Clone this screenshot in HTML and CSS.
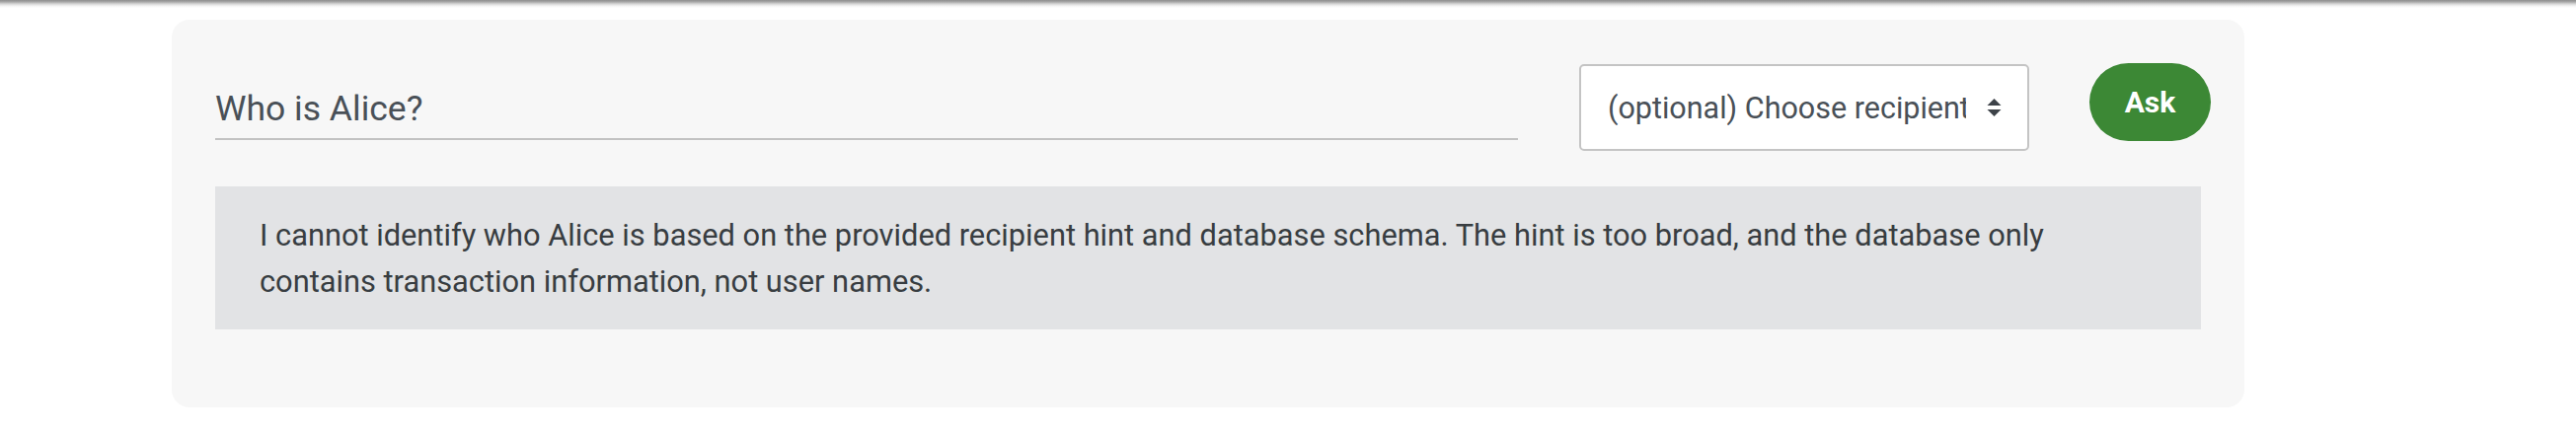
FILE: index.html
```html
<!DOCTYPE html>
<html lang="en">
<head>
<meta charset="utf-8">
<title>Ask</title>
<link rel="stylesheet" href="styles.css">
</head>
<body>
<div class="topbar"></div>
<main class="card">
  <form class="ask-row">
    <input class="question" type="text" value="Who is Alice?">
    <div class="recipient">
      <span class="recipient-text">(optional) Choose recipient</span>
      <svg class="updown" width="15" height="18" viewBox="0 0 15 18" aria-hidden="true">
        <path d="M7.5 0 L14.5 7 L0.5 7 Z" fill="#3d4248"/>
        <path d="M0.5 11 L14.5 11 L7.5 18 Z" fill="#3d4248"/>
      </svg>
    </div>
    <button class="ask-btn" type="button">Ask</button>
  </form>
  <div class="answer">I cannot identify who Alice is based on the provided recipient hint and database schema. The hint is too broad, and the database only contains transaction information, not user names.</div>
</main>
</body>
</html>
```
FILE: styles.css
```css
* { box-sizing: border-box; }

html, body {
  margin: 0;
  padding: 0;
  background: #ffffff;
  font-family: Roboto, "Liberation Sans", Arial, sans-serif;
}

.topbar {
  height: 8px;
  background: linear-gradient(#8e8e8e 0px, #a9a9a9 2px, #d6d6d6 4px, #f2f2f2 6px, #ffffff 8px);
}

.card {
  margin: 12px 0 0 174px;
  width: 2100px;
  height: 393px;
  background: #f7f7f7;
  border-radius: 18px;
  padding: 45px 44px 79px 44px;
}

.ask-row {
  display: flex;
  align-items: flex-start;
  margin: 0;
}

.question {
  flex: none;
  width: 1320px;
  height: 77px;
  padding: 14px 0 0 0;
  border: none;
  border-bottom: 2px solid #c2c2c2;
  background: transparent;
  font-family: Roboto, "Liberation Sans", sans-serif;
  font-size: 35.5px;
  color: #495057;
  outline: none;
}

.recipient {
  flex: none;
  margin-left: 62px;
  width: 456px;
  height: 88px;
  background: #ffffff;
  border: 2px solid #c4c4c4;
  border-radius: 5px;
  display: flex;
  align-items: center;
  padding-left: 27px;
}

.recipient-text {
  flex: none;
  width: 363px;
  overflow: hidden;
  white-space: nowrap;
  font-size: 30.5px;
  color: #495057;
}

.updown {
  margin-left: 21px;
  flex: none;
}

.ask-btn {
  flex: none;
  margin-left: 61px;
  margin-top: -1px;
  width: 123px;
  height: 79px;
  border: none;
  border-radius: 40px;
  background: #3c8835;
  color: #ffffff;
  font-family: Roboto, "Liberation Sans", sans-serif;
  font-weight: 700;
  font-size: 30px;
  padding: 0;
}

.answer {
  margin-top: 36px;
  width: 2012px;
  height: 145px;
  background: #e2e3e5;
  color: #383d41;
  font-size: 30.8px;
  line-height: 47px;
  padding: 25.5px 60px 25.5px 45px;
}
```
